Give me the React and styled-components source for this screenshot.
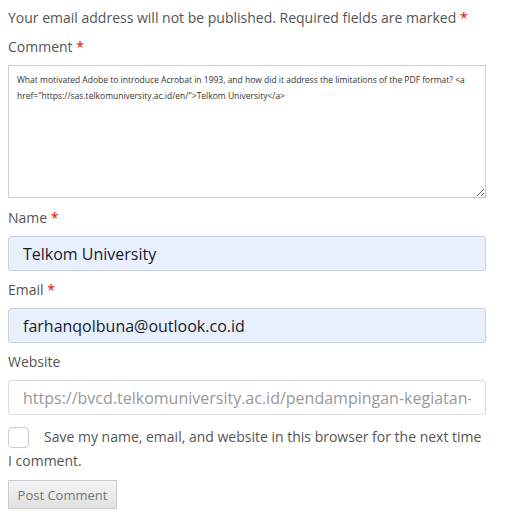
import styled, { createGlobalStyle } from "styled-components";

const GlobalStyle = createGlobalStyle`
  body {
    margin: 8px;
    background: #fff;
    font-family: "Open Sans", "Liberation Sans", sans-serif;
    color: #555;
  }
`;

const Form = styled.form`
  width: 478px;
  display: flex;
  flex-direction: column;
`;

const Notes = styled.p`
  margin: 0 0 9px;
  font-size: 14px;
  line-height: 20px;
`;

const Label = styled.label`
  display: block;
  font-size: 14px;
  line-height: 20px;
  margin-bottom: 8px;
`;

const Required = styled.span`
  color: #e00;
`;

const Field = styled.div`
  margin-bottom: ${({ $gap }) => $gap || 9}px;
`;

const TextArea = styled.textarea`
  display: block;
  box-sizing: border-box;
  width: 478px;
  height: 133px;
  margin: 0;
  padding: 6px 8px;
  border: 1px solid #ccc;
  border-radius: 0;
  font-family: "Open Sans", "Liberation Sans", sans-serif;
  font-size: 8.5px;
  line-height: 16px;
  color: #333;
  resize: vertical;
`;

const Input = styled.input`
  display: block;
  box-sizing: border-box;
  width: 478px;
  height: 35px;
  margin: 0;
  padding: 0 14px;
  border: 1px solid ${({ $filled }) => ($filled ? "#c9cfdc" : "#ddd")};
  border-radius: 3px;
  background: ${({ $filled }) => ($filled ? "#e8f0fe" : "#fff")};
  font-family: "Open Sans", "Liberation Sans", sans-serif;
  font-size: 16px;
  color: #1a1a2e;

  &::placeholder {
    color: #999;
  }
`;

const Consent = styled.p`
  margin: 0 0 7px;
  font-size: 14px;
  line-height: 24px;
`;

const Check = styled.input`
  appearance: none;
  box-sizing: border-box;
  width: 21px;
  height: 21px;
  margin: 0 15px 0 0;
  vertical-align: -6px;
  border: 1px solid #ccc;
  border-radius: 4px;
  background: #fff;
`;

const Submit = styled.button`
  align-self: flex-start;
  box-sizing: border-box;
  width: 109px;
  height: 29px;
  padding: 0;
  border: 1px solid #ccc;
  border-radius: 0;
  background: linear-gradient(#f4f4f4, #e0e0e0);
  font-family: "Open Sans", "Liberation Sans", sans-serif;
  font-size: 13px;
  color: #777;
`;

const App = () => {
  return (
    <>
      <GlobalStyle />
      <Form onSubmit={(e) => e.preventDefault()}>
        <Notes>
          Your email address will not be published. Required fields are marked{" "}
          <Required>*</Required>
        </Notes>
        <Field $gap={10}>
          <Label>
            Comment <Required>*</Required>
          </Label>
          <TextArea
            defaultValue={
              'What motivated Adobe to introduce Acrobat in 1993, and how did it address the limitations of the PDF format? <a href="https://sas.telkomuniversity.ac.id/en/">Telkom University</a>'
            }
          />
        </Field>
        <Field>
          <Label>
            Name <Required>*</Required>
          </Label>
          <Input $filled defaultValue="Telkom University" />
        </Field>
        <Field>
          <Label>
            Email <Required>*</Required>
          </Label>
          <Input $filled defaultValue="farhanqolbuna@outlook.co.id" />
        </Field>
        <Field $gap={10}>
          <Label>Website</Label>
          <Input placeholder="https://bvcd.telkomuniversity.ac.id/pendampingan-kegiatan-" />
        </Field>
        <Consent>
          <Check type="checkbox" />
          Save my name, email, and website in this browser for the next time
          I comment.
        </Consent>
        <Submit type="submit">Post Comment</Submit>
      </Form>
    </>
  );
};

export default App;
